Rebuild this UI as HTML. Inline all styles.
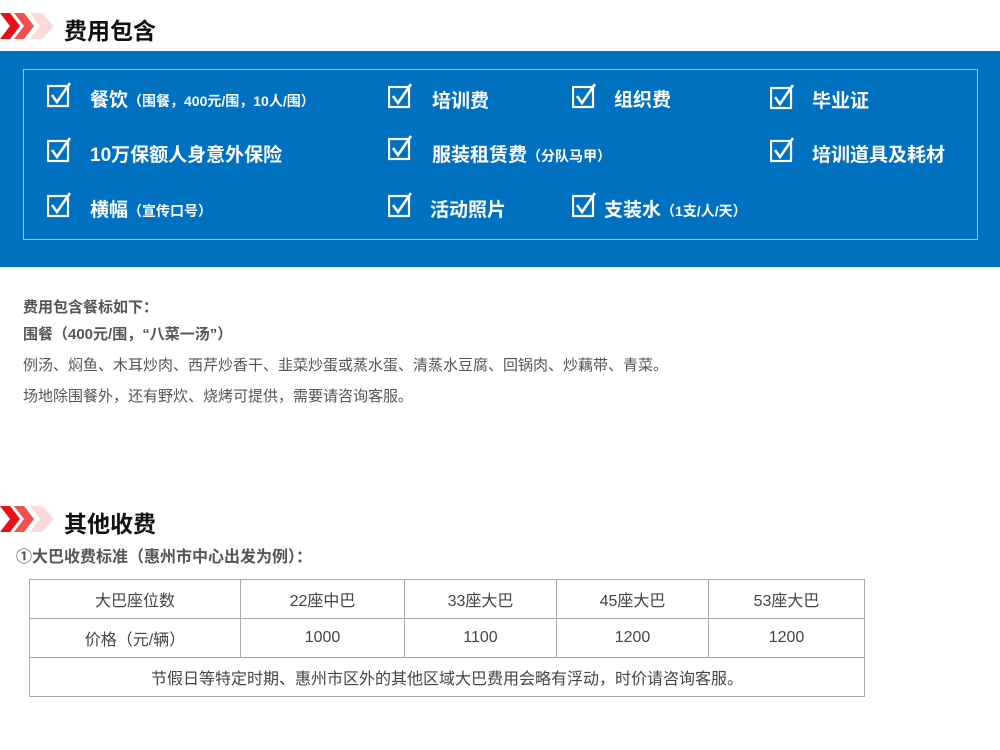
<!DOCTYPE html>
<html><head><meta charset="utf-8"><style>
*{margin:0;padding:0;box-sizing:border-box}
body{width:1000px;height:750px;background:#fff;position:relative;font-family:"Liberation Sans","Noto Sans CJK SC",sans-serif;overflow:hidden}
.h{position:absolute;left:64px;font-size:23px;font-weight:bold;color:#111}
.chev{position:absolute;left:0}
.band{position:absolute;left:0;top:51px;width:1000px;height:216px;background:#0070c0}
.box{position:absolute;left:23px;top:69px;width:955px;height:171px;border:1px solid #9cc3e6}
.it{position:absolute;color:#fff;font-size:19px;font-weight:bold;white-space:nowrap}
.it small{font-size:14px}
.cb{position:absolute;width:26px;height:26px}
.p{position:absolute;left:23px;font-size:15px;color:#555;white-space:nowrap}
table{position:absolute;left:29px;top:579px;border-collapse:collapse;font-size:16px;color:#444}
td{border:1px solid #aaa;height:39px;text-align:center}
</style></head><body>
<svg class="chev" style="top:13px" width="60" height="26" viewBox="0 0 60 26"><polygon points="0,0 10,0 20,13 10,26 0,26 10,13" fill="#e8101a"/><polygon points="14,0 24,0 34,13 24,26 14,26 24,13" fill="#f05050"/><polygon points="30,0 42,0 54,13 42,26 30,26 40,13" fill="#fcd9da"/></svg>
<div class="h" style="top:12px">费用包含</div>
<div class="band"></div><div class="box"></div>
<svg width="0" height="0" style="position:absolute"><defs><g id="c"><rect x="1" y="4" width="20" height="20" fill="none" stroke="#fff" stroke-width="2.2"/><path d="M5 13 L10 20 L23 1" fill="none" stroke="#fff" stroke-width="2.6"/></g></defs></svg>
<svg class="cb" style="left:47px;top:82px"><use href="#c"/></svg>
<svg class="cb" style="left:388px;top:83px"><use href="#c"/></svg>
<svg class="cb" style="left:572px;top:83px"><use href="#c"/></svg>
<svg class="cb" style="left:770px;top:84px"><use href="#c"/></svg>
<svg class="cb" style="left:47px;top:137px"><use href="#c"/></svg>
<svg class="cb" style="left:388px;top:135px"><use href="#c"/></svg>
<svg class="cb" style="left:770px;top:137px"><use href="#c"/></svg>
<svg class="cb" style="left:47px;top:192px"><use href="#c"/></svg>
<svg class="cb" style="left:388px;top:192px"><use href="#c"/></svg>
<svg class="cb" style="left:572px;top:192px"><use href="#c"/></svg>
<div class="it" style="left:90px;top:85px">餐饮<small>（围餐，400元/围，10人/围）</small></div>
<div class="it" style="left:432px;top:86px">培训费</div>
<div class="it" style="left:614px;top:85px">组织费</div>
<div class="it" style="left:812px;top:86px">毕业证</div>
<div class="it" style="left:90px;top:140px">10万保额人身意外保险</div>
<div class="it" style="left:432px;top:140px">服装租赁费<small>（分队马甲）</small></div>
<div class="it" style="left:812px;top:140px">培训道具及耗材</div>
<div class="it" style="left:90px;top:195px">横幅<small>（宣传口号）</small></div>
<div class="it" style="left:430px;top:195px">活动照片</div>
<div class="it" style="left:604px;top:195px">支装水<small>（1支/人/天）</small></div>
<div class="p" style="top:296px;font-weight:bold">费用包含餐标如下：</div>
<div class="p" style="top:323px;font-weight:bold">围餐（400元/围，“八菜一汤”）</div>
<div class="p" style="top:354px">例汤、焖鱼、木耳炒肉、西芹炒香干、韭菜炒蛋或蒸水蛋、清蒸水豆腐、回锅肉、炒藕带、青菜。</div>
<div class="p" style="top:385px">场地除围餐外，还有野炊、烧烤可提供，需要请咨询客服。</div>
<svg class="chev" style="top:506px" width="60" height="26" viewBox="0 0 60 26"><polygon points="0,0 10,0 20,13 10,26 0,26 10,13" fill="#e8101a"/><polygon points="14,0 24,0 34,13 24,26 14,26 24,13" fill="#f05050"/><polygon points="30,0 42,0 54,13 42,26 30,26 40,13" fill="#fcd9da"/></svg>
<div class="h" style="top:505px">其他收费</div>
<div class="p" style="left:16px;top:543px;font-weight:bold;font-size:16px">①大巴收费标准（惠州市中心出发为例）：</div>
<table>
<tr><td style="width:211px">大巴座位数</td><td style="width:164px">22座中巴</td><td style="width:152px">33座大巴</td><td style="width:152px">45座大巴</td><td style="width:156px">53座大巴</td></tr>
<tr><td>价格（元/辆）</td><td>1000</td><td>1100</td><td>1200</td><td>1200</td></tr>
<tr><td colspan="5">节假日等特定时期、惠州市区外的其他区域大巴费用会略有浮动，时价请咨询客服。</td></tr>
</table>
</body></html>
